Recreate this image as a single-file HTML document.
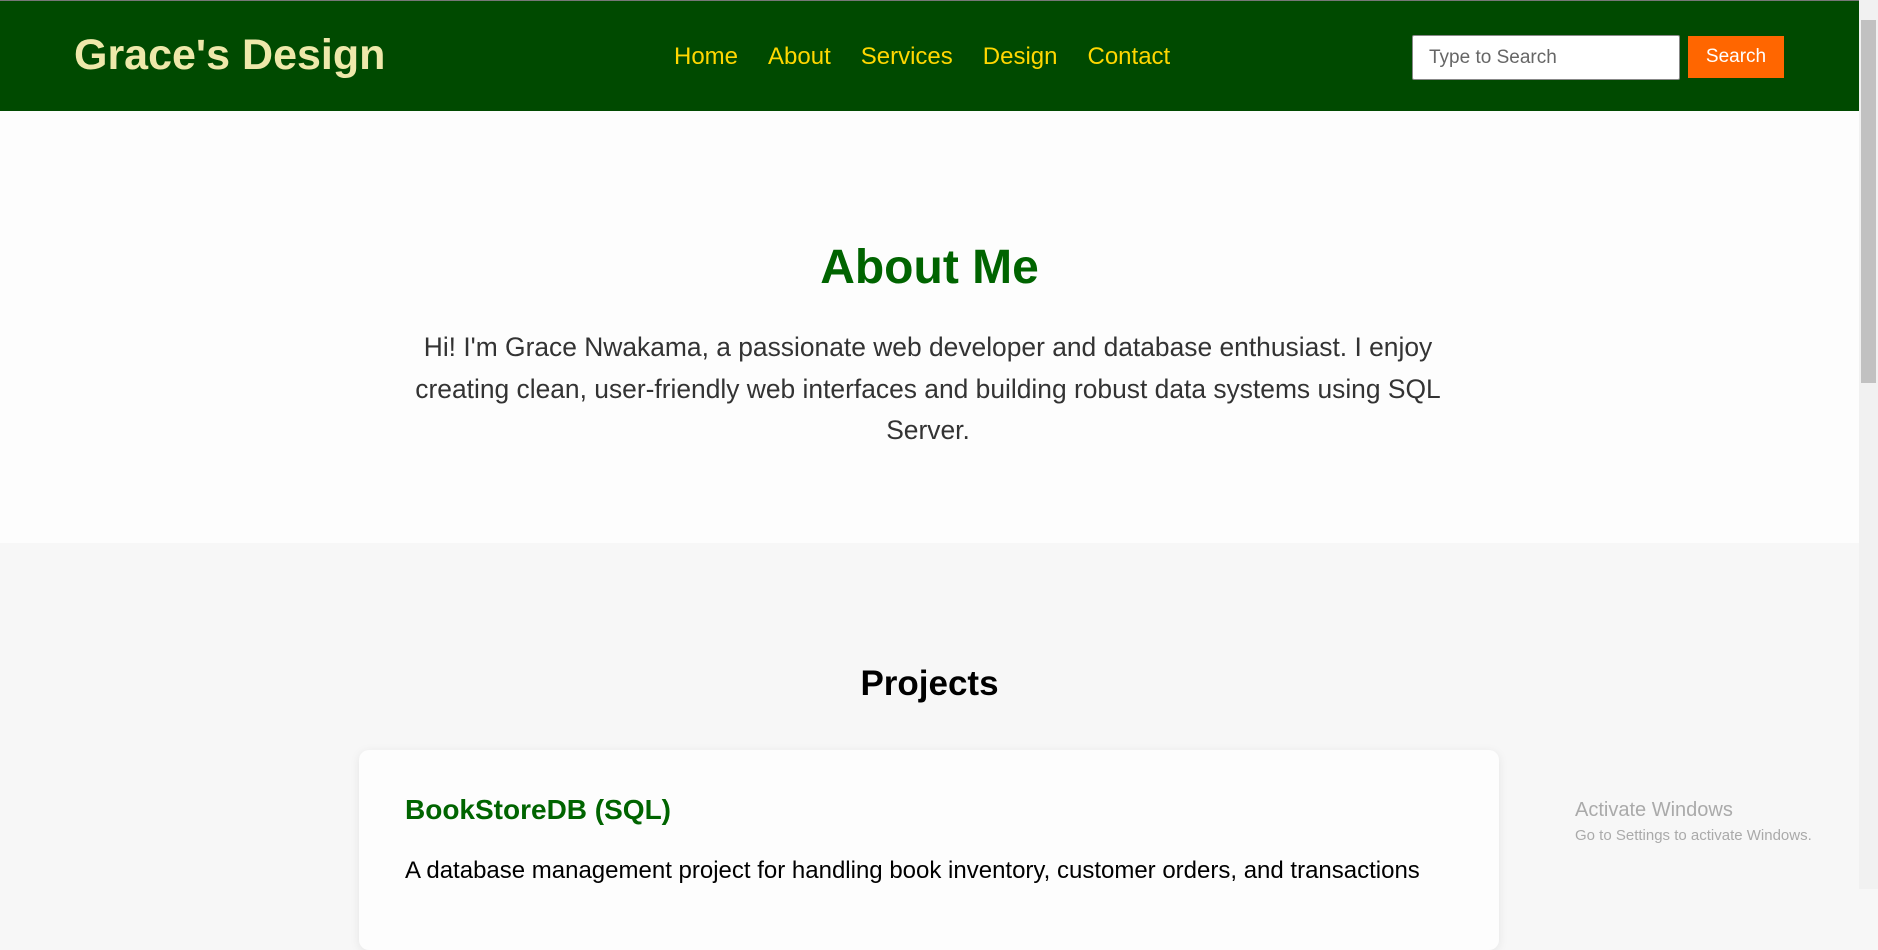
<!DOCTYPE html>
<html><head><meta charset="utf-8"><style>
*{margin:0;padding:0;box-sizing:border-box}
html,body{width:1878px;height:889px;overflow:hidden;font-family:"Liberation Sans",Arial,sans-serif;background:#f7f7f7}
.page{position:absolute;left:0;top:0;width:1859px;height:889px}
header{position:absolute;left:0;top:0;width:1859px;height:111px;background:#004a00;border-top:1px solid #777}
.logo{position:absolute;left:74px;top:30px;font-size:43px;font-weight:bold;color:#eee8aa}
nav{position:absolute;left:674px;top:42px;font-size:24px;color:#ffd700;white-space:nowrap}
nav span{margin-right:30px}
.inp{position:absolute;left:1412px;top:34px;width:268px;height:45px;background:#fff;border:1px solid #888;border-radius:2px;font-size:19px;color:#666;padding:11px 16px}
.btn{position:absolute;left:1688px;top:35px;width:96px;height:42px;background:#ff6600;color:#fff;font-size:19px;text-align:center;line-height:42px}
.about{position:absolute;left:0;top:110px;width:1859px;height:433px;background:#fdfdfd}
h1{position:absolute;top:240px;left:0;width:1859px;text-align:center;font-size:48px;color:#006400}
.p{position:absolute;top:327px;left:408px;width:1040px;text-align:center;font-size:26.4px;line-height:41.5px;color:#333}
h2{position:absolute;top:664px;left:0;width:1859px;text-align:center;font-size:35px;color:#000}
.card{position:absolute;left:359px;top:750px;width:1140px;height:200px;background:#fdfdfd;border-radius:10px;box-shadow:0 2px 10px rgba(0,0,0,.08)}
.card h3{position:absolute;left:46px;top:44px;font-size:28px;color:#006400}
.card p{position:absolute;left:46px;top:107px;font-size:24px;color:#000;white-space:nowrap}
.aw{position:absolute;left:1575px;top:799px;color:#aaa;font-size:20px}
.aw2{position:absolute;left:1575px;top:827px;color:#aaa;font-size:15px}
.sb{position:absolute;left:1859px;top:0;width:19px;height:889px;background:#f1f1f1}
.th{position:absolute;left:1861px;top:20px;width:15px;height:363px;background:#c1c1c1}
</style></head><body>
<div class="page">
<div class="about"></div>
<header>
<div class="logo">Grace's Design</div>
<nav><span>Home</span><span>About</span><span>Services</span><span>Design</span><span>Contact</span></nav>
<div class="inp">Type to Search</div>
<div class="btn">Search</div>
</header>
<h1>About Me</h1>
<div class="p">Hi! I'm Grace Nwakama, a passionate web developer and database enthusiast. I enjoy creating clean, user-friendly web interfaces and building robust data systems using SQL Server.</div>
<h2>Projects</h2>
<div class="card"><h3>BookStoreDB (SQL)</h3><p>A database management project for handling book inventory, customer orders, and transactions</p></div>
<div class="aw">Activate Windows</div>
<div class="aw2">Go to Settings to activate Windows.</div>
</div>
<div class="sb"></div><div class="th"></div>
</body></html>
